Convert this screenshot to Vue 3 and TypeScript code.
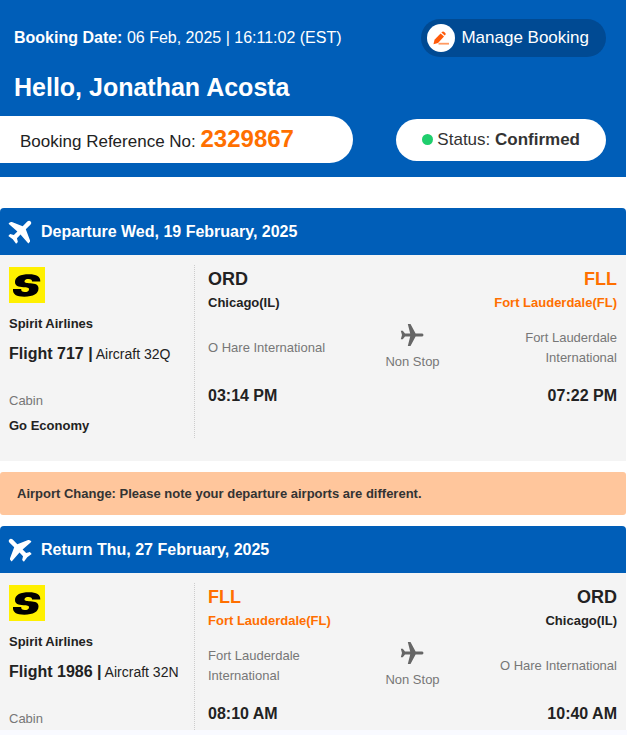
<script setup lang="ts">
interface Stop {
  code: string
  city: string
  airport: string
  time: string
  accent: boolean
}

interface Leg {
  id: string
  kind: 'departure' | 'return'
  title: string
  airline: string
  flight: string
  aircraft: string
  cabin?: string
  stops: string
  from: Stop
  to: Stop
}

const legs: Leg[] = [
  {
    id: 'outbound',
    kind: 'departure',
    title: 'Departure Wed, 19 February, 2025',
    airline: 'Spirit Airlines',
    flight: 'Flight 717 |',
    aircraft: 'Aircraft 32Q',
    cabin: 'Go Economy',
    stops: 'Non Stop',
    from: { code: 'ORD', city: 'Chicago(IL)', airport: 'O Hare International', time: '03:14 PM', accent: false },
    to: { code: 'FLL', city: 'Fort Lauderdale(FL)', airport: 'Fort Lauderdale International', time: '07:22 PM', accent: true },
  },
  {
    id: 'inbound',
    kind: 'return',
    title: 'Return Thu, 27 February, 2025',
    airline: 'Spirit Airlines',
    flight: 'Flight 1986 |',
    aircraft: 'Aircraft 32N',
    stops: 'Non Stop',
    from: { code: 'FLL', city: 'Fort Lauderdale(FL)', airport: 'Fort Lauderdale International', time: '08:10 AM', accent: true },
    to: { code: 'ORD', city: 'Chicago(IL)', airport: 'O Hare International', time: '10:40 AM', accent: false },
  },
]

const notices: Record<string, string> = {
  outbound: 'Airport Change: Please note your departure airports are different.',
}
</script>

<template>
  <main class="page">
    <header class="summary">
      <div class="summary-row">
        <p class="date"><b>Booking Date:</b> 06 Feb, 2025 | 16:11:02 (EST)</p>
        <a class="manage" href="#manage">
          <svg class="manage-icon" viewBox="0 0 28 28" aria-hidden="true">
            <circle cx="14" cy="14" r="14" fill="#fff" />
            <path d="M6.500 20.200 7.500 15.800 13.600 9.400 17 12.400 11 18.900Z" fill="#ff5a0a" />
            <path d="M14.400 8.600 15.300 7.800Q16.300 7.100 17.200 7.900L18.300 8.900Q19.100 9.800 18.400 10.700L17.700 11.500Z" fill="#ff5a0a" />
            <path d="M11.500 19.700H22" stroke="#ff9a62" stroke-width="1.800" />
          </svg>
          Manage Booking
        </a>
      </div>
      <h1 class="greeting">Hello, Jonathan Acosta</h1>
      <div class="summary-row">
        <p class="reference">Booking Reference No: <strong>2329867</strong></p>
        <p class="status"><i class="dot"></i><span>Status: <b>Confirmed</b></span></p>
      </div>
    </header>

    <div class="legs">
      <template v-for="leg in legs" :key="leg.id">
        <section class="leg">
          <h2 class="leg-title">
            <svg class="leg-icon" :class="leg.kind" viewBox="-12 -12 24 24" aria-hidden="true">
              <path d="M15 0C15 -1.500 13.800 -2.200 12.500 -2.200H6L1.300 -12.800Q.7 -14 -.6 -14H-2.200L-1.500 -2.200H-6.500L-8.500 -5.500H-11L-10.200 0 -11 5.500H-8.500L-6.500 2.200H-1.500L-2.200 14H-.6Q.7 14 1.300 12.800L6 2.200H12.500C13.800 2.200 15 1.500 15 0Z" />
            </svg>
            {{ leg.title }}
          </h2>
          <div class="leg-body">
            <div class="carrier">
              <svg class="logo" viewBox="0 0 36 36" role="img" aria-label="Spirit">
                <rect width="36" height="36" fill="#fff000" />
                <path d="M31.300 14.600C31.600 9.500 27.500 7.200 20 7.200 11.500 7.200 6.200 9.600 6 14.800 5.800 19 9.500 20 14.500 20.300 18 20.500 20.200 20.600 20 22.400 19.800 24.300 18 25 15.800 25 13.200 25 12 24 12.200 22L4 22C3.500 27.500 7.500 29.700 15.300 29.700 24.500 29.700 29.300 27 29.500 21.600 29.700 17.600 26.500 16.500 21.300 16.200 17.500 16 15.300 15.900 15.500 14.200 15.700 12.400 17.400 11.900 19.400 11.900 22.200 11.900 23.200 12.800 23 14.600Z" fill="#000" />
              </svg>
              <p class="airline">{{ leg.airline }}</p>
              <p class="flight"><b>{{ leg.flight }}</b> {{ leg.aircraft }}</p>
              <p class="cabin-label">Cabin</p>
              <p v-if="leg.cabin" class="cabin">{{ leg.cabin }}</p>
            </div>
            <div class="route">
              <div class="stop">
                <p class="code" :class="{ accent: leg.from.accent }">{{ leg.from.code }}</p>
                <p class="city" :class="{ accent: leg.from.accent }">{{ leg.from.city }}</p>
                <p class="airport">{{ leg.from.airport }}</p>
                <p class="time">{{ leg.from.time }}</p>
              </div>
              <div class="via">
                <svg class="via-icon" viewBox="0 0 24 24" aria-hidden="true">
                  <path d="M23.500 12C23.500 11.200 22.800 10.500 21.500 10.500H15.600L10.500 1H7.800L10.200 10.500H5L2.800 7.800H.8L2 12 .8 16.200H2.800L5 13.500H10.200L7.800 23H10.500L15.600 13.500H21.500C22.800 13.500 23.500 12.800 23.500 12Z" />
                </svg>
                <p>{{ leg.stops }}</p>
              </div>
              <div class="stop end">
                <p class="code" :class="{ accent: leg.to.accent }">{{ leg.to.code }}</p>
                <p class="city" :class="{ accent: leg.to.accent }">{{ leg.to.city }}</p>
                <p class="airport">{{ leg.to.airport }}</p>
                <p class="time">{{ leg.to.time }}</p>
              </div>
            </div>
          </div>
        </section>
        <p v-if="notices[leg.id]" class="notice" role="note">{{ notices[leg.id] }}</p>
      </template>
    </div>
  </main>
</template>

<style>
body {
  background: #f9faff;
}
</style>

<style scoped>
.page {
  padding-right: 1px;
  background: #fff;
  color: #222;
  font-family: "Liberation Sans", Arial, sans-serif;
}

p,
h1,
h2 {
  margin: 0;
}

.summary {
  padding: 19px 20px 14px 0;
  background: #005eb8;
}

.summary-row {
  display: flex;
  align-items: center;
  justify-content: space-between;
}

.date {
  padding-left: 14px;
  color: #fff;
  font-size: 16px;
}

.manage {
  display: flex;
  align-items: center;
  gap: 6px;
  padding: 5px 17px 5px 6px;
  border-radius: 19px;
  background: #004a93;
  color: #fff;
  font-size: 17px;
  text-decoration: none;
}

.manage-icon {
  width: 28px;
  height: 28px;
}

.greeting {
  padding: 14px 0 13px 14px;
  color: #fff;
  font-size: 25px;
  line-height: 32px;
}

.reference {
  padding: 4px 59px 0 20px;
  border-radius: 0 24px 24px 0;
  background: #fff;
  font-size: 17px;
  line-height: 43px;
}

.reference strong {
  color: #ff6f00;
  font-size: 24px;
  line-height: 24px;
}

.status {
  display: flex;
  align-items: center;
  gap: 4px;
  padding: 0 26px;
  border-radius: 21px;
  background: #fff;
  color: #333;
  font-size: 17px;
  line-height: 42px;
}

.dot {
  width: 11px;
  height: 11px;
  border-radius: 50%;
  background: #1fce6d;
}

.legs {
  display: flex;
  flex-direction: column;
  gap: 11px;
  padding-top: 31px;
}

.leg {
  border-radius: 4px 4px 0 0;
  overflow: hidden;
  background: #f4f4f4;
}

.leg-title {
  display: flex;
  align-items: center;
  gap: 9px;
  padding-left: 8px;
  background: #005eb8;
  color: #fff;
  font-size: 16px;
  line-height: 47px;
}

.leg-icon {
  width: 24px;
  height: 24px;
  overflow: visible;
  fill: #fff;
}

.leg-icon.departure {
  transform: rotate(-45deg);
}

.leg-icon.return {
  transform: rotate(-135deg);
}

.leg-body {
  display: grid;
  grid-template-columns: 195px 1fr;
  padding-top: 10px;
}

.carrier {
  padding: 2px 0 0 9px;
  border-right: 1px dotted #ccc;
}

.leg:first-child .leg-body {
  padding-bottom: 23px;
}

.logo {
  display: block;
  width: 36px;
  height: 36px;
}

.airline {
  padding-top: 11px;
  font-size: 13px;
  font-weight: bold;
  line-height: 20px;
}

.flight {
  padding-top: 10px;
  font-size: 14px;
  line-height: 20px;
}

.flight b {
  font-size: 16px;
}

.cabin-label {
  padding-top: 25px;
  color: #777;
  font-size: 13px;
  line-height: 23px;
}

.cabin {
  padding: 4px 0 2px;
  font-size: 13px;
  font-weight: bold;
  line-height: 20px;
}

.route {
  display: grid;
  grid-template-columns: repeat(3, 1fr);
  padding: 2px 9px 0 13px;
}

.stop {
  display: flex;
  flex-direction: column;
}

.end {
  text-align: right;
}

.code {
  font-size: 18px;
  font-weight: bold;
  line-height: 24px;
}

.city {
  font-size: 13px;
  font-weight: bold;
  line-height: 23px;
  white-space: nowrap;
}

.end .city {
  align-self: flex-end;
}

.accent {
  color: #ff6f00;
}

.airport {
  display: flex;
  align-items: center;
  min-height: 40px;
  padding-top: 14px;
  color: #777;
  font-size: 13px;
  line-height: 20px;
}

.end .airport {
  justify-content: flex-end;
}

.time {
  padding-top: 18px;
  font-size: 16px;
  font-weight: bold;
  line-height: 20px;
}

.via {
  display: flex;
  flex-direction: column;
  align-items: center;
  gap: 5px;
  padding-top: 56px;
  color: #777;
  font-size: 13px;
  line-height: 20px;
}

.via-icon {
  width: 24px;
  height: 24px;
  fill: #666;
}

.notice {
  padding: 0 17px;
  border-radius: 3px;
  background: #ffc69c;
  color: #333;
  font-size: 13px;
  font-weight: bold;
  line-height: 43px;
}
</style>
